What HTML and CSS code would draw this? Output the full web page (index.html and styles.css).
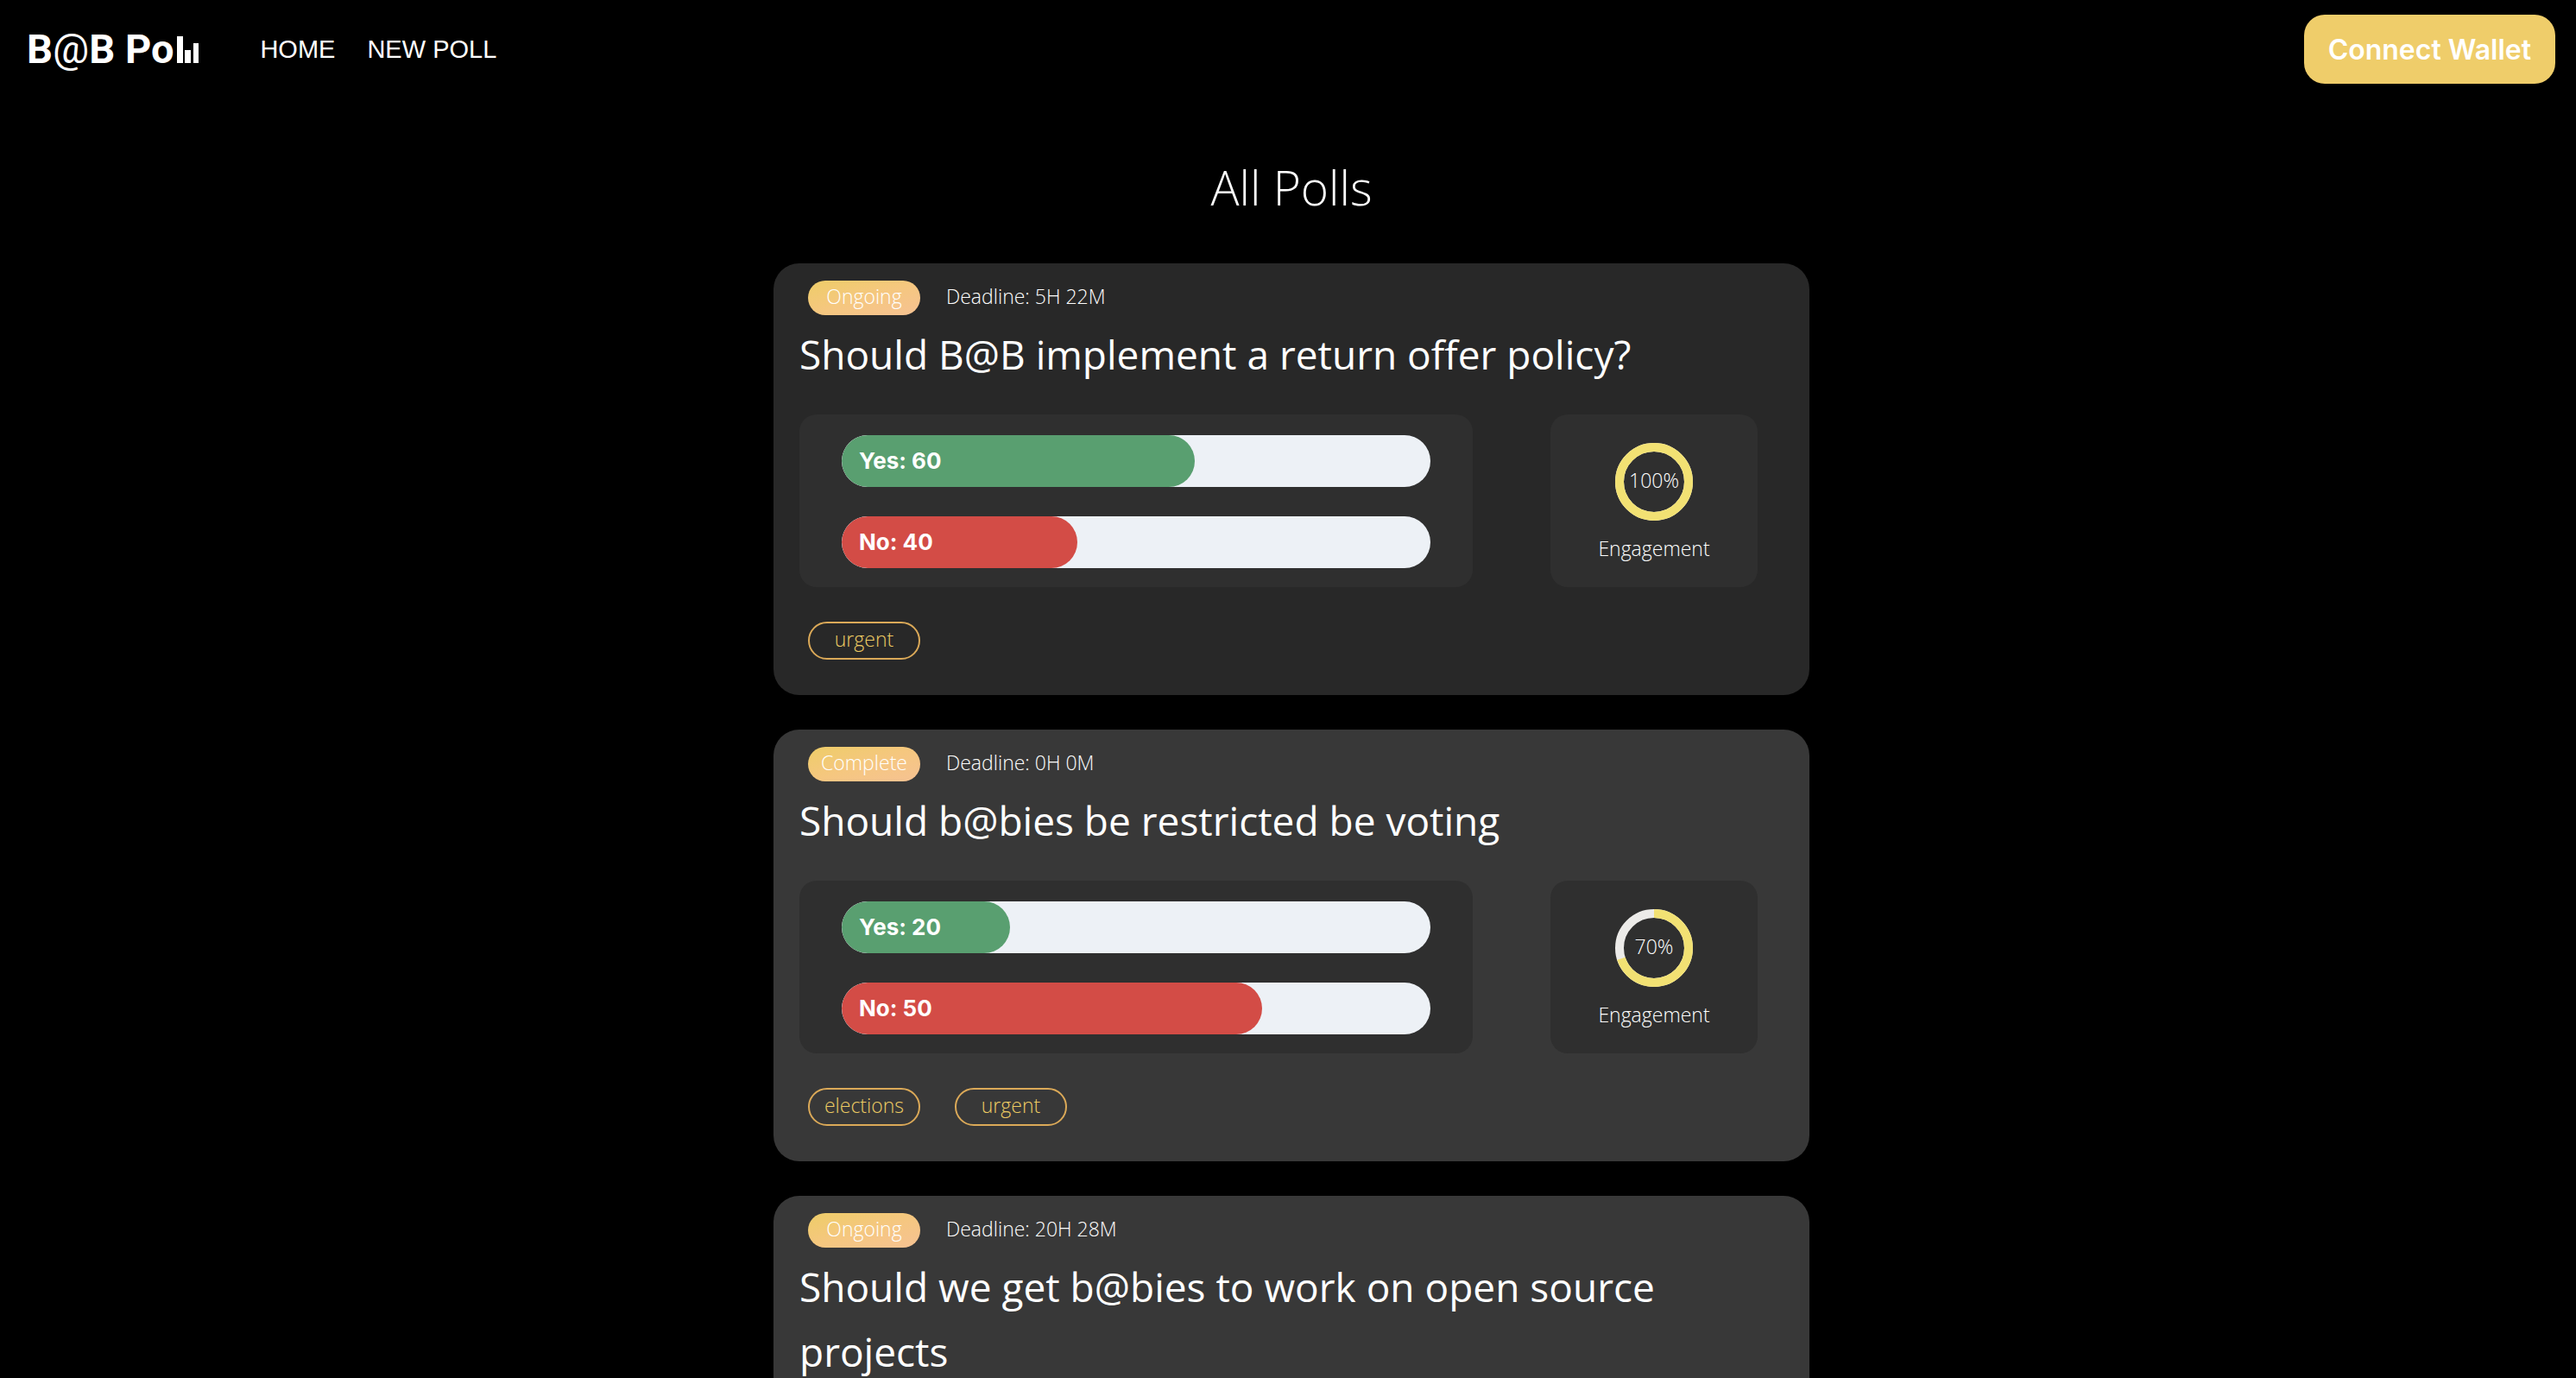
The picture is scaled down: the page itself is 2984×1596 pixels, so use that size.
FILE: index.html
```html
<!DOCTYPE html>
<html lang="en">
<head>
<meta charset="utf-8">
<meta name="viewport" content="width=device-width, initial-scale=1">
<title>B@B Poll</title>
<link rel="stylesheet" href="styles.css">
</head>
<body>
<header class="site-header">
  <a class="logo" href="#" aria-label="B@B Poll">
    <span>B<span class="logo-at">@</span>B Po</span>
    <svg class="logo-bars" viewBox="0 0 26 31" aria-hidden="true">
      <path d="M0 0h7v31H0zM9 16h7v15H9zM19 8h6v23h-6z"/>
    </svg>
  </a>
  <nav class="site-nav">
    <a href="#">HOME</a>
    <a href="#">NEW POLL</a>
  </nav>
  <button class="wallet" type="button">Connect Wallet</button>
</header>

<main class="polls">
  <h1 class="polls-title">All Polls</h1>

  <article class="card card-voted">
    <div class="meta"><span class="status">Ongoing</span><span class="label">Deadline: 5H 22M</span></div>
    <h2 class="question">Should B@B implement a return offer policy?</h2>
    <div class="results">
      <div class="panel votes">
        <div class="bar"><div class="fill yes" style="width:60%">Yes: 60</div></div>
        <div class="bar"><div class="fill no" style="width:40%">No: 40</div></div>
      </div>
      <div class="panel engagement">
        <div class="ring">
          <svg viewBox="0 0 90 90" aria-hidden="true">
            <circle class="track" cx="45" cy="45" r="40"/>
            <circle class="value" cx="45" cy="45" r="40" pathLength="100" stroke-dasharray="100 0"/>
          </svg>
          <span class="label">100%</span>
        </div>
        <span class="label">Engagement</span>
      </div>
    </div>
    <div class="tags"><span class="tag">urgent</span></div>
  </article>

  <article class="card">
    <div class="meta"><span class="status">Complete</span><span class="label">Deadline: 0H 0M</span></div>
    <h2 class="question">Should b@bies be restricted be voting</h2>
    <div class="results">
      <div class="panel votes">
        <div class="bar"><div class="fill yes" style="width:28.57%">Yes: 20</div></div>
        <div class="bar"><div class="fill no" style="width:71.43%">No: 50</div></div>
      </div>
      <div class="panel engagement">
        <div class="ring">
          <svg viewBox="0 0 90 90" aria-hidden="true">
            <circle class="track" cx="45" cy="45" r="40"/>
            <circle class="value" cx="45" cy="45" r="40" pathLength="100" stroke-dasharray="70 30"/>
          </svg>
          <span class="label">70%</span>
        </div>
        <span class="label">Engagement</span>
      </div>
    </div>
    <div class="tags"><span class="tag">elections</span><span class="tag">urgent</span></div>
  </article>

  <article class="card">
    <div class="meta"><span class="status">Ongoing</span><span class="label">Deadline: 20H 28M</span></div>
    <h2 class="question">Should we get b@bies to work on open source projects</h2>
  </article>
</main>
</body>
</html>
```
FILE: styles.css
```css
* {
  box-sizing: border-box;
}

html {
  scrollbar-width: none;
}

body {
  margin: 0;
  background: #000;
  color: #fff;
  font: 300 23px/36px "Open Sans", "Noto Sans", sans-serif;
}

a {
  color: inherit;
  text-decoration: none;
}

/* Header */
.site-header {
  display: flex;
  align-items: center;
  padding: 17px 24px 0 31px;
}

.logo {
  display: flex;
  align-items: baseline;
  gap: 4px;
  font: 700 47px/80px Roboto, sans-serif;
}

.logo-at {
  font-weight: 400;
}

.logo-bars {
  width: 26px;
  height: 31px;
  fill: #fff;
}

.site-nav {
  display: flex;
  gap: 37px;
  margin-left: 70px;
  font: 400 29px/40px "Liberation Sans", Arial, sans-serif;
}

.wallet {
  height: 80px;
  margin-left: auto;
  padding: 2px 28px 0;
  border: 0;
  border-radius: 24px;
  background: #efcd6a;
  color: #fff;
  font: 600 32px/40px Inter, sans-serif;
  cursor: pointer;
}

/* Poll list */
.polls {
  display: flex;
  flex-direction: column;
  align-items: center;
  gap: 40px;
  padding: 76px 0 40px 8px;
}

.polls-title {
  margin: 0 0 4px;
  font-size: 55px;
  font-weight: 300;
  line-height: 88px;
}

.card {
  width: 100%;
  max-width: 1200px;
  padding: 20px 30px 41px;
  border-radius: 30px;
  background: #383838;
}

.card-voted {
  background: #282828;
}

.meta {
  display: flex;
  align-items: center;
  gap: 30px;
  padding-left: 10px;
}

.label,
.status,
.tag {
  padding-bottom: 4px;
}

.status,
.tag {
  width: 130px;
  border-radius: 22px;
  text-align: center;
}

.status {
  background: linear-gradient(to bottom right, #eecd68, #f5c77f 50%, #f6c293);
}

.question {
  margin: 8px 0 32px;
  font-size: 46px;
  font-weight: 500;
  line-height: 75px;
}

.results {
  display: flex;
  justify-content: space-between;
  gap: 30px;
  padding-right: 30px;
}

.panel {
  display: flex;
  flex-direction: column;
  height: 200px;
  border-radius: 20px;
  background: #2f2f2f;
}

.votes {
  flex: 0 1 780px;
  gap: 34px;
  padding: 24px 49px 0;
}

.bar {
  overflow: hidden;
  border-radius: 30px;
  background: #edf1f6;
}

.fill {
  padding-left: 20px;
  border-radius: 30px;
  font: 700 26px/60px Inter, sans-serif;
}

.yes {
  background: #599f70;
}

.no {
  background: #d34c46;
}

.engagement {
  flex: 0 0 240px;
  align-items: center;
  gap: 14px;
  padding-top: 33px;
}

.ring {
  display: grid;
  place-items: center;
  width: 90px;
  height: 90px;
}

.ring > * {
  grid-area: 1 / 1;
}

.ring svg {
  width: 90px;
  height: 90px;
  fill: none;
  stroke-width: 10;
  transform: rotate(-90deg);
}

.track {
  stroke: #ecebe9;
}

.value {
  stroke: #f2e173;
}

.tags {
  display: flex;
  gap: 40px;
  margin-top: 40px;
  padding-left: 10px;
}

.tag {
  border: 2px solid #dba958;
  color: #edcb63;
}
```
